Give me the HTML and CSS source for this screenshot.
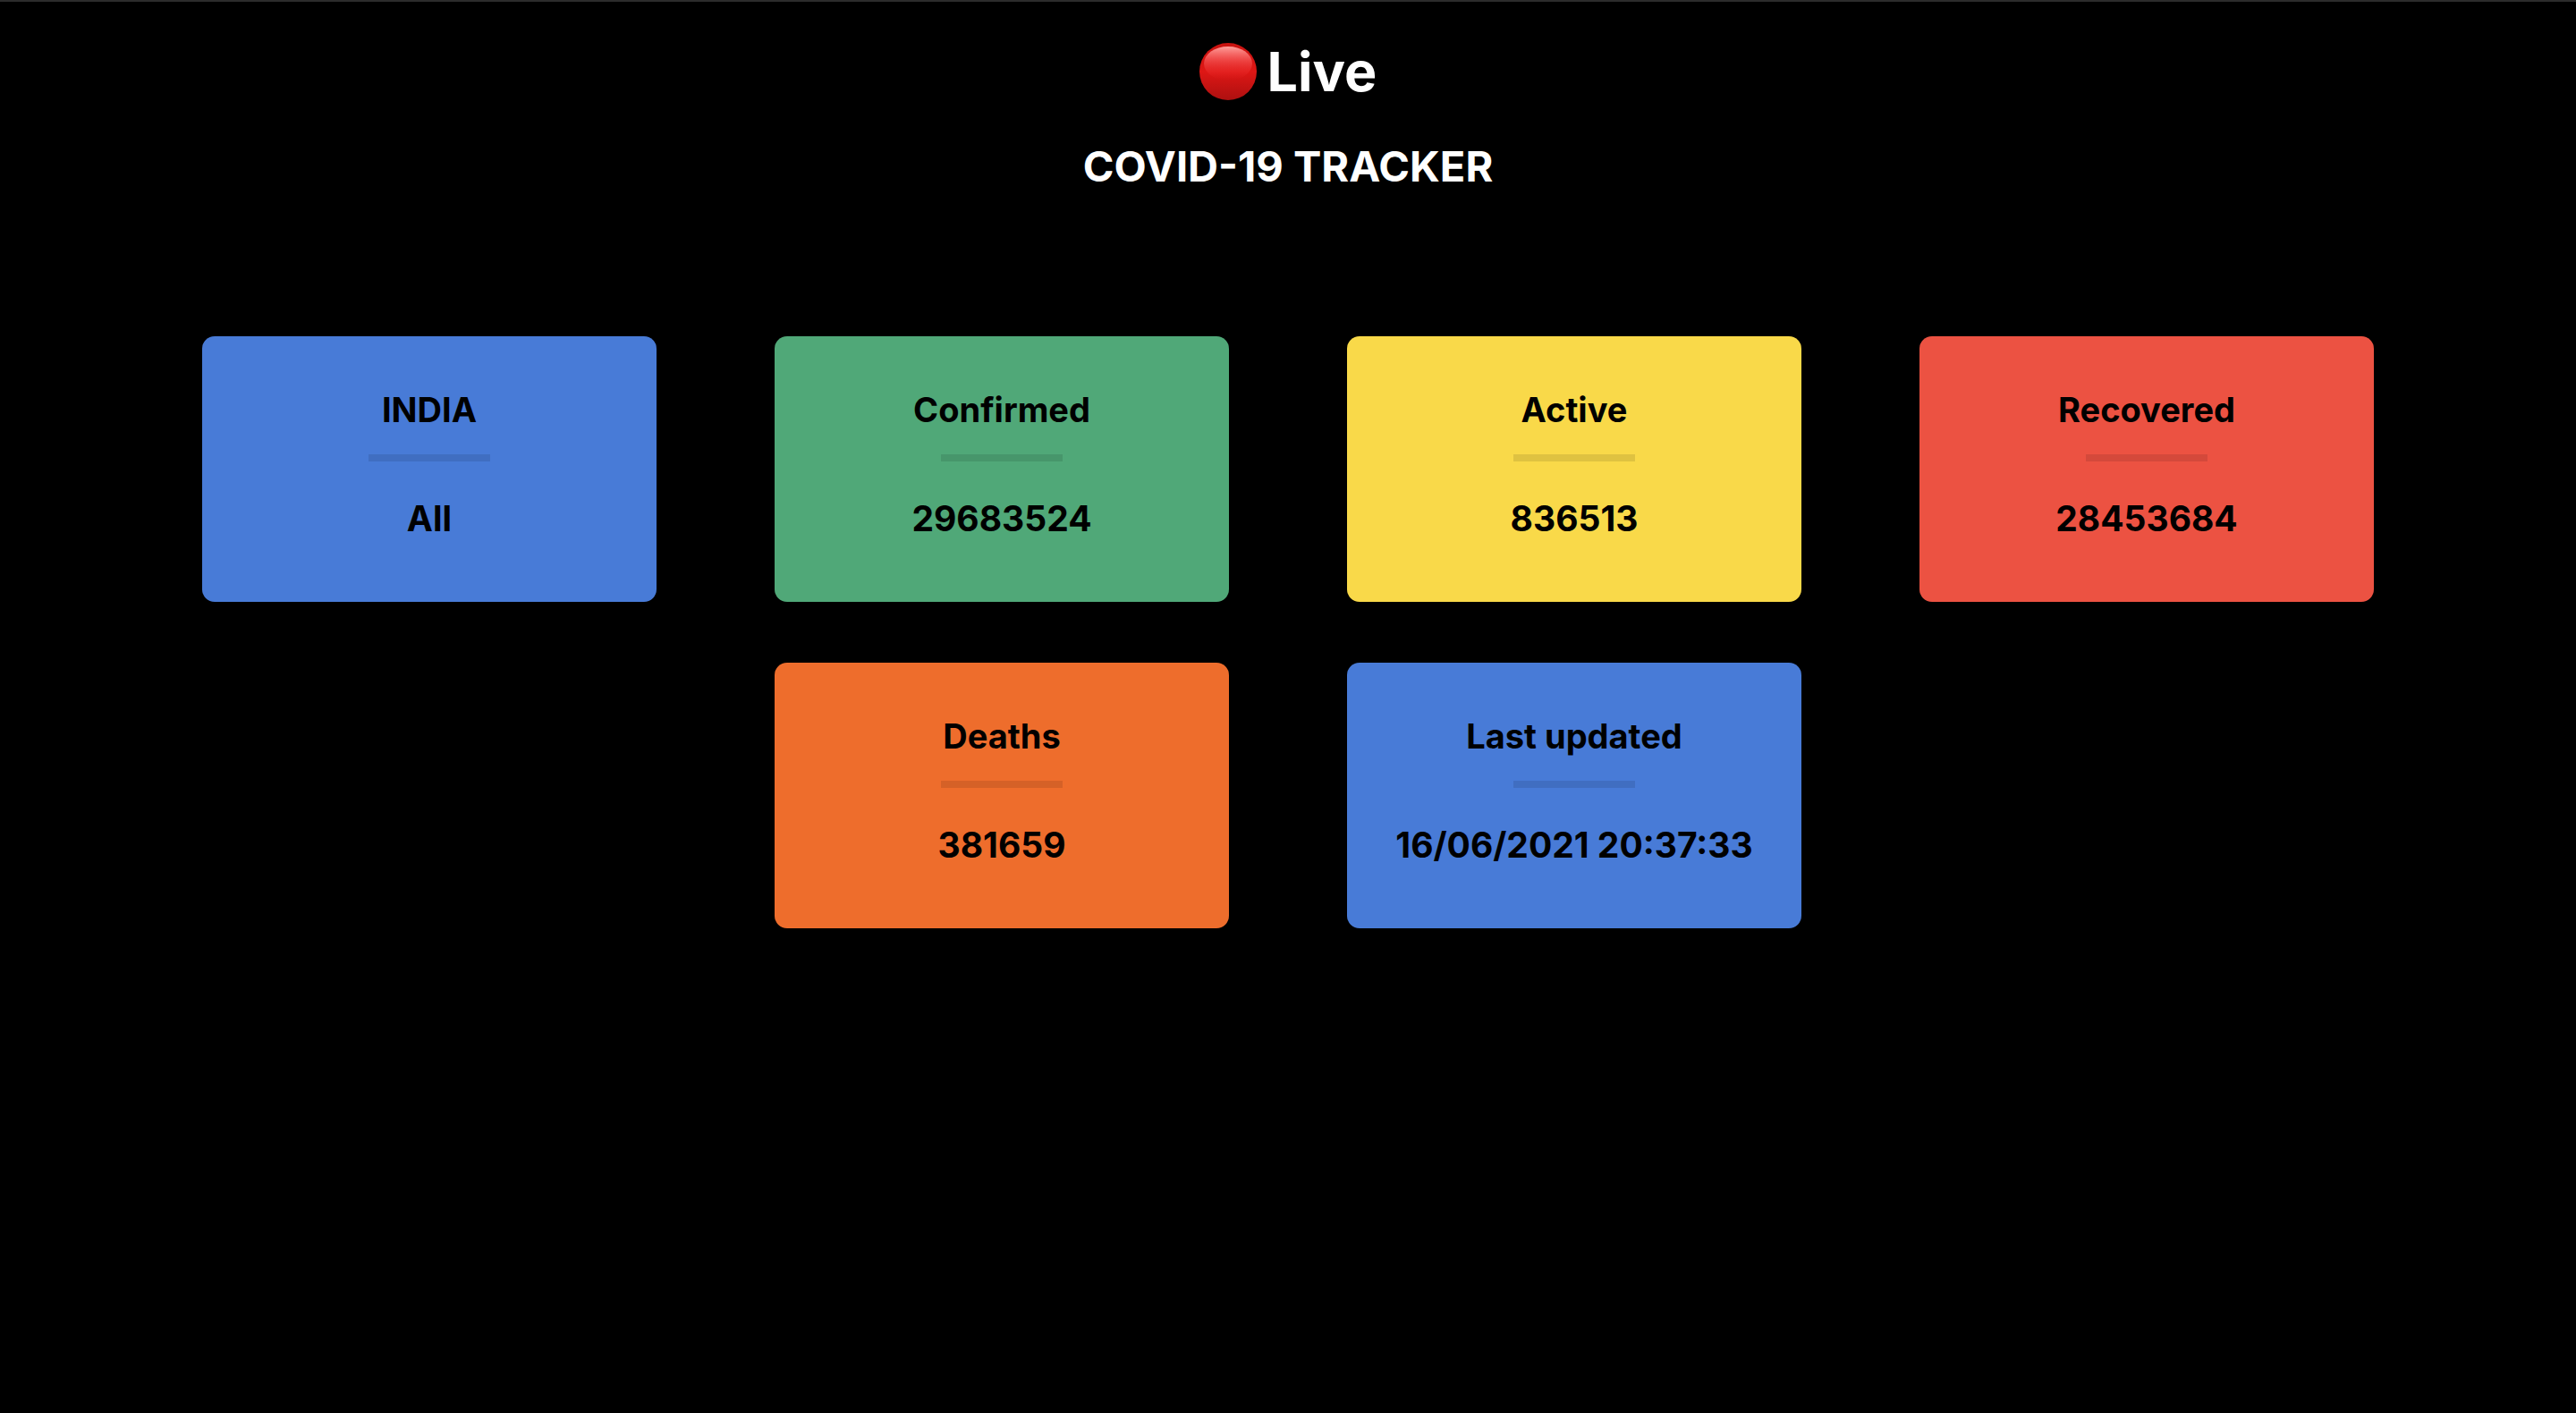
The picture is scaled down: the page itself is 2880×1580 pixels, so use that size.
FILE: index.html
```html
<!DOCTYPE html>
<html lang="en">
<head>
<meta charset="utf-8">
<title>COVID-19 Tracker</title>
<link rel="stylesheet" href="styles.css">
</head>
<body>
<header class="header">
  <h1 class="live">
    <svg class="live-dot" viewBox="0 0 64 64" aria-hidden="true">
      <defs>
        <linearGradient id="ball" x1="0" y1="0" x2="0" y2="1">
          <stop offset="0" stop-color="#c9120f"/>
          <stop offset=".5" stop-color="#de1715"/>
          <stop offset="1" stop-color="#ad1010"/>
        </linearGradient>
        <linearGradient id="shine" x1="0" y1="0" x2="0" y2="1">
          <stop offset="0" stop-color="#ffa09c"/>
          <stop offset=".4" stop-color="#f66" stop-opacity=".6"/>
          <stop offset="1" stop-color="#e22" stop-opacity="0"/>
        </linearGradient>
      </defs>
      <circle cx="32" cy="32" r="32" fill="url(#ball)"/>
      <ellipse cx="32" cy="23" rx="27" ry="19" fill="url(#shine)"/>
    </svg>
    <span>Live</span>
  </h1>
  <h2 class="title">COVID-19 TRACKER</h2>
</header>
<main>
  <ul class="cards">
    <li class="card blue"><h3 class="label">INDIA</h3><p class="value">All</p></li>
    <li class="card green"><h3 class="label">Confirmed</h3><p class="value">29683524</p></li>
    <li class="card yellow"><h3 class="label">Active</h3><p class="value">836513</p></li>
    <li class="card red"><h3 class="label">Recovered</h3><p class="value">28453684</p></li>
    <li class="card orange"><h3 class="label">Deaths</h3><p class="value">381659</p></li>
    <li class="card blue"><h3 class="label">Last updated</h3><p class="value">16/06/2021 20:37:33</p></li>
  </ul>
</main>
</body>
</html>
```
FILE: styles.css
```css
* { box-sizing: border-box; margin: 0; padding: 0; }
body {
  min-height: 100vh;
  background: #000;
  border-top: 2px solid #2c2c2c;
  color: #fff;
  font-family: Inter, "Liberation Sans", sans-serif;
}
.header { display: flex; flex-direction: column; align-items: center; padding-top: 38px; }
.live { display: flex; align-items: center; gap: 12px; font-size: 61px; line-height: 80px; font-weight: 700; }
.live-dot { width: 64px; height: 64px; }
.title { margin-top: 36px; font-size: 47px; line-height: 60px; font-weight: 700; }
.cards {
  display: flex;
  flex-wrap: wrap;
  justify-content: center;
  row-gap: 68px;
  padding: 160px 160px 0;
  list-style: none;
}
.card {
  width: calc(25% - 132px);
  margin: 0 66px;
  padding: 56px 20px 67px;
  border-radius: 14px;
  color: #000;
  text-align: center;
  font-size: 39px;
  font-weight: 700;
  line-height: 52px;
}
.label { font-size: 38px; }
.label::after {
  content: "";
  display: block;
  width: 136px;
  height: 8px;
  margin: 24px auto 38px;
  background: rgba(0, 0, 0, .1);
}
.blue { background: #487bd7; }
.green { background: #50a878; }
.yellow { background: #f9d949; }
.red { background: #ec5242; }
.orange { background: #ee6d2c; }
```
